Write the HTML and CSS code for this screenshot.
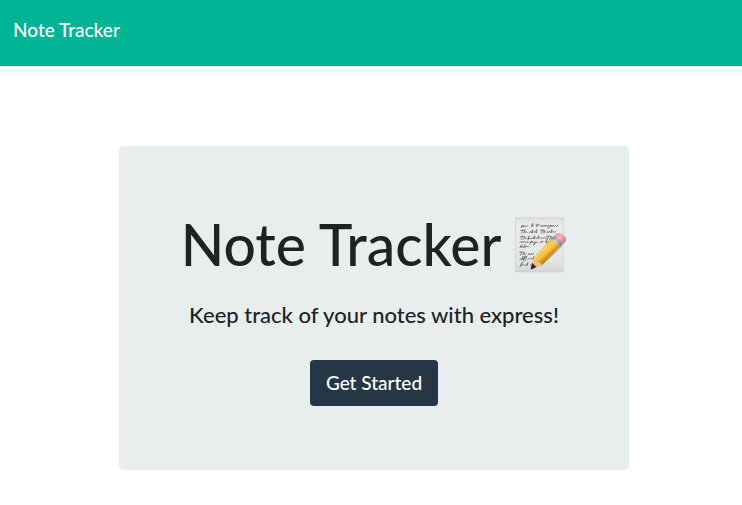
FILE: index.html
```html
<!DOCTYPE html>
<html lang="en">
<head>
<meta charset="utf-8">
<meta name="viewport" content="width=device-width, initial-scale=1">
<title>Note Tracker</title>
<link rel="stylesheet" href="styles.css">
</head>
<body>
<nav class="navbar"><a class="brand" href="#">Note Tracker</a></nav>
<main class="container">
<section class="jumbotron">
<h1 class="title">Note Tracker
<svg class="memo" viewBox="27 33 156 168" role="img" aria-label="Memo">
<defs>
<linearGradient id="paper" x1="0" y1="0" x2="0" y2="1"><stop offset="0" stop-color="#dcdede"/><stop offset=".12" stop-color="#e9eaea"/><stop offset=".8" stop-color="#e4e5e5"/><stop offset="1" stop-color="#d3d5d5"/></linearGradient>
<linearGradient id="wood" gradientUnits="userSpaceOnUse" x1="98" y1="122" x2="130" y2="158"><stop offset="0" stop-color="#e3a52b"/><stop offset=".22" stop-color="#f2bb43"/><stop offset=".38" stop-color="#ffdc70"/><stop offset=".58" stop-color="#f7bd3e"/><stop offset=".8" stop-color="#e39a22"/><stop offset="1" stop-color="#b97314"/></linearGradient>
<linearGradient id="metal" gradientUnits="userSpaceOnUse" x1="137" y1="96" x2="169" y2="122"><stop offset="0" stop-color="#838b98"/><stop offset=".35" stop-color="#c7cdd6"/><stop offset="1" stop-color="#747b88"/></linearGradient>
<linearGradient id="rubber" gradientUnits="userSpaceOnUse" x1="148" y1="82" x2="178" y2="112"><stop offset="0" stop-color="#ed8d91"/><stop offset=".4" stop-color="#ffb1b2"/><stop offset="1" stop-color="#d8646d"/></linearGradient>
</defs>
<rect x="28.500" y="35.500" width="143" height="162" fill="url(#paper)" stroke="#c9cdcd" stroke-width="2"/>
<g class="writing">
<path d="M45 63q6-9 7-5-6 10-5 5l7-4 1 4 3-4 3 4 5-5M76 62l4-10-2 10 6-5M91 54v9l5-5M94 57l7-1M105 62q-1-6 5-4l1 4 4-5 2 5 3-5 3 5 4-5 3 4-4 7 7-9M132 62l3-5 3 5 3-5 3 5 4-4 4 4 4-5"/>
<path d="M44 73l10-1M50 72l-4 10M53 81l4-10-1 10 5-4 4 3M70 81l3-5 3 5 4-10-1 10 5-5 3 4 6-10-2 11 2-1M103 73l10-1M109 72l-4 10M111 81l4-9 1 8 4-3M123 81l2-5 3 4 3-5 2 5 5-10-2 10 6-4 3 4 4-5"/>
<path d="M43 92l10-1M49 91l-4 10M52 100l4-9 1 8 4-3M65 100l4-10-2 10 5-4 2 3 4-4 3 4 5-10-2 10 5-4 3 3 6-9-2 9 5-4 3 4 4-4 3 4 5-4 3 4 4-4M122 91l10-1M127 91l-3 9M131 100l4-10 1 9 5-4 6 3"/>
<path d="M42 110l4-4 2 4 3-4 2 4 4-4 3 4 4-4 2 4 3-3M71 115l4-9q6-2 3 3l-5 1 8-3 2 3 4-4-1 8-4 3 9-9 4 1M102 110l4-5 2 5 4-5M118 110l4-9-1 9 6-4 5 3M136 105l8-1"/>
<path d="M42 125l5-9-2 9 5-4 3 4 4-9-1 9 6-4 5 1"/>
<path d="M41 139l10-1M47 138l-4 10M50 147l4-9 1 8 5-3M66 147l3-5 3 5 4-5 3 5 4-5M92 146l4-5 3 4 5-4"/>
<path d="M42 162q1-6 5-3l4-8-3 11 5-4q3-10 5-9l-6 15q5-13 11-13l-6 14M65 160l4-3 3 3 4-3 3 3 5-9-2 9 7-3"/>
<path d="M42 183q6-18 8-14l-5 11 6-5 3 4 4-3 3 3 5-10-2 10M73 178l4-5 3 5"/>
</g>
<path class="shadow" d="M79 188L107 179 167 124 160 116Z"/>
<path d="M83 155L135 98Q151 99 160 124L108 177Q94 178 83 155Z" fill="url(#wood)"/>
<path d="M83 155Q85 162 93 161 94 170 103 171 105 174 108 177L78 189 75 185Z" fill="#edc18a"/>
<path d="M79 171Q84 176 91 183L78 190Q73 191 74 186Z" fill="#332a27"/>
<path d="M91 158L143 106M103 170L157 118" fill="none" stroke="#bd7b22" stroke-width="2" opacity=".6"/>
<path d="M135 99L145 89Q164 94 171 114L161 125Q154 106 135 99Z" fill="url(#metal)"/>
<path d="M139 95Q158 101 165 120M142 92Q161 98 168 117" fill="none" stroke="#747c89" stroke-width="1"/>
<path d="M145 89L151 83Q162 77 174 87 184 98 178 107L171 114Q165 95 145 89Z" fill="url(#rubber)"/>
</svg></h1>
<p class="lead">Keep track of your notes with express!</p>
<a class="btn" href="#">Get Started</a>
</section>
</main>
</body>
</html>
```
FILE: styles.css
```css
* { box-sizing: border-box; }
body { margin: 0; background: #fff; color: #1e2223; font-family: Lato, sans-serif; font-size: 19px; line-height: 28px; }
.navbar { display: flex; background: #00b496; padding: 16px 13px 22px; }
.brand { color: #fff; text-decoration: none; font-weight: 500; }
.container { padding: 0 113px 0 119px; margin-top: 80px; }
.jumbotron { background: #e8eeee; border-radius: 5px; padding: 64px 32px; text-align: center; }
.title { display: flex; justify-content: center; gap: 14px; margin: 0 0 20px; font-size: 57px; line-height: 68px; font-weight: 500; }
.memo { width: 52px; height: 56px; margin-top: 7px; }
.writing { fill: none; stroke: #5a5c5c; stroke-width: 2; stroke-linecap: round; stroke-linejoin: round; }
.shadow { fill: #777; opacity: .35; }
.lead { margin: 0 0 28px; font-size: 22px; line-height: 34px; font-weight: 500; }
.btn { display: inline-block; background: #253746; color: #fff; text-decoration: none; border-radius: 4px; padding: 9px 16px; font-weight: 500; }
```
